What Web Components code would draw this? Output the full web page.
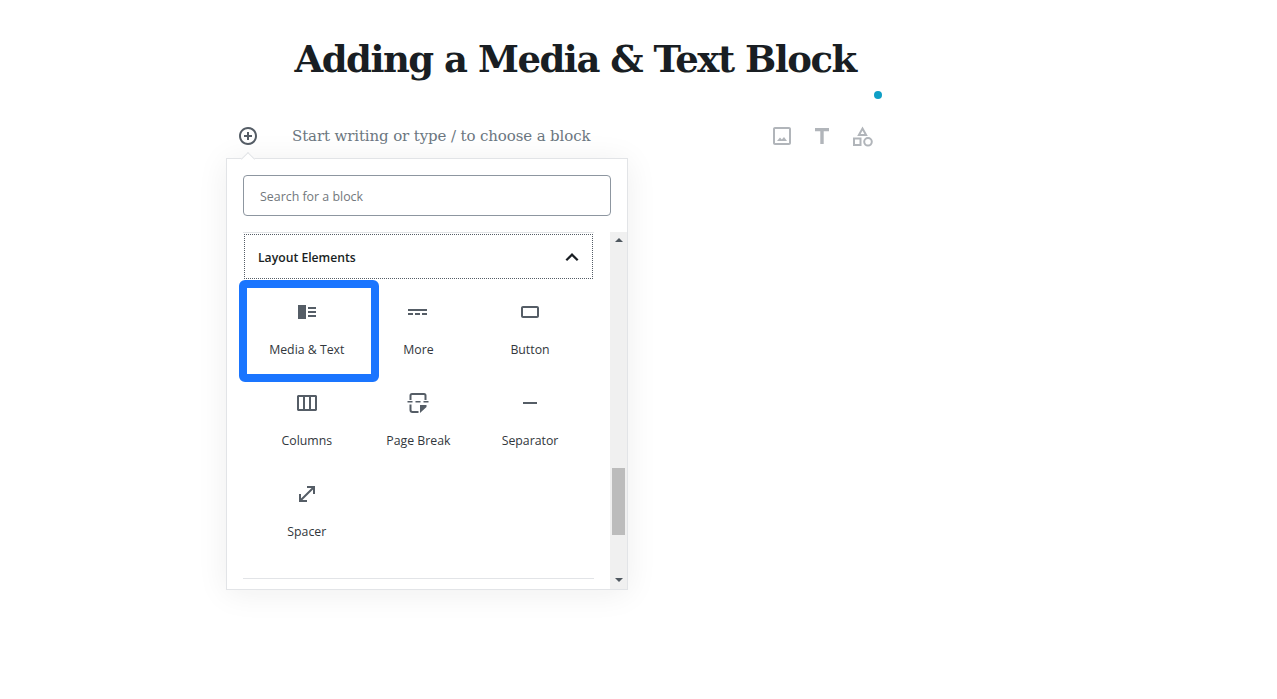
<!DOCTYPE html>
<html lang="en">
<head>
<meta charset="utf-8">
<title>Adding a Media &amp; Text Block</title>
<style>
  html, body { margin: 0; background: #fff; overflow: hidden; }
  body { font-family: "Open Sans", "Noto Sans", sans-serif; font-size: 13px; color: #191e23; }
</style>
</head>
<body>

<wp-editor>
  <post-title>Adding a Media &amp; Text Block</post-title>
  <block-appender>Start writing or type / to choose a block</block-appender>
  <block-inserter placeholder="Search for a block">
    <inserter-panel title="Layout Elements">
      <block-item icon="media" highlight>Media &amp; Text</block-item>
      <block-item icon="more">More</block-item>
      <block-item icon="button">Button</block-item>
      <block-item icon="columns">Columns</block-item>
      <block-item icon="pagebreak">Page Break</block-item>
      <block-item icon="separator">Separator</block-item>
      <block-item icon="spacer">Spacer</block-item>
    </inserter-panel>
  </block-inserter>
</wp-editor>

<script>
const ICONS = {
  media: '<path d="M13 17h8v-2h-8v2zM3 19h8V5H3v14zM13 9h8V7h-8v2zm0 4h8v-2h-8v2z"/>',
  more: '<path d="M2 9v2h19V9H2zm0 6h5v-2H2v2zm7 0h5v-2H9v2zm7 0h5v-2h-5v2z"/>',
  button: '<path d="M19 6H5c-1.100 0-2 .9-2 2v8c0 1.100.9 2 2 2h14c1.100 0 2-.9 2-2V8c0-1.100-.9-2-2-2zm0 10H5V8h14v8z"/>',
  columns: '<path d="M21 4H3L2 5v14l1 1h18l1-1V5l-1-1zM8 18H4V6h4v12zm6 0h-4V6h4v12zm6 0h-4V6h4v12z"/>',
  pagebreak: '<path d="M3.500 9V4.500A2.500 2.500 0 016 2h12a2.500 2.500 0 012.500 2.500V9h-2V4.500A.5.5 0 0018 4H6a.5.5 0 00-.5.5V9h-2zM1.500 10h5v1.600h-5zM9.500 10h5v1.600h-5zM17.500 10h5v1.600h-5zM3.500 13.500h2V19a1 1 0 001 1h6v2h-6a3 3 0 01-3-3v-5.500zM14 22v-8h6.500v2L14 22z"/>',
  separator: '<path d="M19 13H5v-2h14v2z"/>',
  spacer: '<path d="M12 4h8v8h-2V7.400L7.400 18H12v2H4v-8h2v4.600L16.600 6H12V4z"/>'
};

class WpEditor extends HTMLElement {
  constructor() {
    super();
    this.attachShadow({ mode: "open" }).innerHTML = `
      <style>
        :host { display: block; width: 1277px; height: 699px; box-sizing: border-box; padding-left: 226px; }
        .column { width: 698px; }
      </style>
      <div class="column"><slot></slot></div>`;
  }
}

class PostTitle extends HTMLElement {
  constructor() {
    super();
    this.attachShadow({ mode: "open" }).innerHTML = `
      <style>
        :host { display: block; height: 116px; box-sizing: border-box; padding-top: 34px; position: relative; }
        h1 {
          margin: 0; text-align: center; color: #191e23;
          font: bold 37px/50px "DejaVu Serif", serif;
          letter-spacing: -1.500px;
        }
        .dot {
          position: absolute; left: 648px; top: 91px; width: 8px; height: 8px;
          border-radius: 50%; background: #0f9fc6;
        }
      </style>
      <h1><slot></slot></h1>
      <span class="dot"></span>`;
  }
}

class BlockAppender extends HTMLElement {
  constructor() {
    super();
    this.attachShadow({ mode: "open" }).innerHTML = `
      <style>
        :host { display: flex; align-items: center; height: 40px; padding-left: 12px; }
        .plus { width: 20px; height: 20px; fill: #555d66; flex: none; }
        .hint {
          margin-left: 34px; flex: 1; color: #6c7781;
          font: 15px/40px "DejaVu Serif", serif;
          letter-spacing: -0.120px;
        }
        .tools { display: flex; gap: 16px; margin-right: 50px; fill: #b1b5ba; }
        .tools svg { width: 24px; height: 24px; display: block; }
      </style>
      <svg class="plus" viewBox="0 0 20 20"><path d="M10 1c-5 0-9 4-9 9s4 9 9 9 9-4 9-9-4-9-9-9zm0 16c-3.900 0-7-3.100-7-7s3.100-7 7-7 7 3.100 7 7-3.100 7-7 7zm1-11H9v3H6v2h3v3h2v-3h3V9h-3V6z"/></svg>
      <span class="hint"><slot></slot></span>
      <div class="tools">
        <svg viewBox="0 0 24 24"><path d="M19 3H5c-1.100 0-2 .9-2 2v14c0 1.100.9 2 2 2h14c1.100 0 2-.9 2-2V5c0-1.100-.9-2-2-2zm0 16H5V5h14v14zM7 17h10l-3-4-2.200 2.600L10 13.500 7 17z"/></svg>
        <svg viewBox="0 0 24 24"><path d="M5 4h14v3.200h-5.300V20h-3.400V7.200H5z"/></svg>
        <svg viewBox="0 0 24 24"><path d="M12.500 4.500l3.600 6.500H8.900z" fill="none" stroke="#b1b5ba" stroke-width="2"/><rect x="4" y="14.500" width="6.500" height="6.500" fill="none" stroke="#b1b5ba" stroke-width="2"/><circle cx="18" cy="17.800" r="3.800" fill="none" stroke="#b1b5ba" stroke-width="2"/></svg>
      </div>`;
  }
}

class BlockInserter extends HTMLElement {
  constructor() {
    super();
    const ph = this.getAttribute("placeholder") || "";
    this.attachShadow({ mode: "open" }).innerHTML = `
      <style>
        :host {
          display: block; position: relative; width: 402px; height: 432px; margin-top: 2px;
          box-sizing: border-box; background: #fff; border: 1px solid #e2e4e7;
          box-shadow: 0 3px 30px rgba(25, 30, 35, .07);
        }
        .caret {
          position: absolute; left: 16px; top: -5px; width: 9px; height: 9px; background: #fff;
          border-left: 1px solid #e2e4e7; border-top: 1px solid #e2e4e7; transform: rotate(45deg);
        }
        .search { padding: 16px 16px 16px; }
        input {
          display: block; width: 100%; height: 41px; box-sizing: border-box; padding: 2px 16px 0;
          border: 1px solid #8d96a0; border-radius: 4px; font: 12.400px "Open Sans", sans-serif; outline: none;
        }
        input::placeholder { color: #72777c; opacity: 1; }
        .body { display: flex; height: 357px; }
        .list { flex: 1; min-width: 0; padding: 0 16px; }
        .bar { width: 17px; flex: none; background: #f0f0f0; display: flex; flex-direction: column; align-items: center; justify-content: space-between; padding: 6px 0 7px; box-sizing: border-box; position: relative; }
        .up, .down { width: 0; height: 0; border-left: 4px solid transparent; border-right: 4px solid transparent; }
        .up { border-bottom: 4px solid #505860; }
        .down { border-top: 4px solid #505860; }
        .thumb { position: absolute; left: 2px; top: 236px; width: 13px; height: 67px; background: #bcbcbc; }
      </style>
      <span class="caret"></span>
      <div class="search"><input type="text" placeholder="${ph}"></div>
      <div class="body">
        <div class="list"><slot></slot></div>
        <div class="bar"><span class="up"></span><span class="thumb"></span><span class="down"></span></div>
      </div>`;
  }
}

class InserterPanel extends HTMLElement {
  constructor() {
    super();
    const title = this.getAttribute("title") || "";
    this.attachShadow({ mode: "open" }).innerHTML = `
      <style>
        :host { display: block; border-top: 1px solid #e2e4e7; border-bottom: 1px solid #e2e4e7; }
        .head {
          display: flex; align-items: center; justify-content: space-between;
          height: 45px; box-sizing: border-box; margin: 1px 1px 0; padding: 0 13px;
          border: 1px dotted #555d66; font: 600 12.200px "Open Sans", sans-serif; color: #191e23;
        }
        .head span { padding-top: 2px; }
        .head svg { width: 24px; height: 24px; fill: #191e23; display: block; margin-right: -5px; }
        .grid {
          display: grid; grid-template-columns: repeat(3, 111.600px); grid-auto-rows: 91px;
          margin: 6px 0 20px 8px;
        }
      </style>
      <div class="head"><span>${title}</span><svg viewBox="0 0 24 24"><path d="M12 8l-6.500 6.500 1.600 1.600L12 11.200l4.900 4.900 1.600-1.600z"/></svg></div>
      <div class="grid"><slot></slot></div>`;
  }
}

class BlockItem extends HTMLElement {
  constructor() {
    super();
    const icon = ICONS[this.getAttribute("icon")] || "";
    this.attachShadow({ mode: "open" }).innerHTML = `
      <style>
        :host { display: flex; flex-direction: column; align-items: center; position: relative; padding-top: 15px; box-sizing: border-box; }
        svg { width: 24px; height: 24px; fill: #555d66; display: block; }
        .label { margin-top: 17px; font: 12.300px/18px "Open Sans", sans-serif; color: #32373c; }
        :host([highlight])::after {
          content: ""; position: absolute; left: -12px; right: -16px; top: -5px; bottom: -6px;
          border: 8px solid #1a75ff; border-radius: 6px;
        }
      </style>
      <svg viewBox="0 0 24 24">${icon}</svg>
      <span class="label"><slot></slot></span>`;
  }
}

customElements.define("wp-editor", WpEditor);
customElements.define("post-title", PostTitle);
customElements.define("block-appender", BlockAppender);
customElements.define("block-inserter", BlockInserter);
customElements.define("inserter-panel", InserterPanel);
customElements.define("block-item", BlockItem);
</script>
</body>
</html>
